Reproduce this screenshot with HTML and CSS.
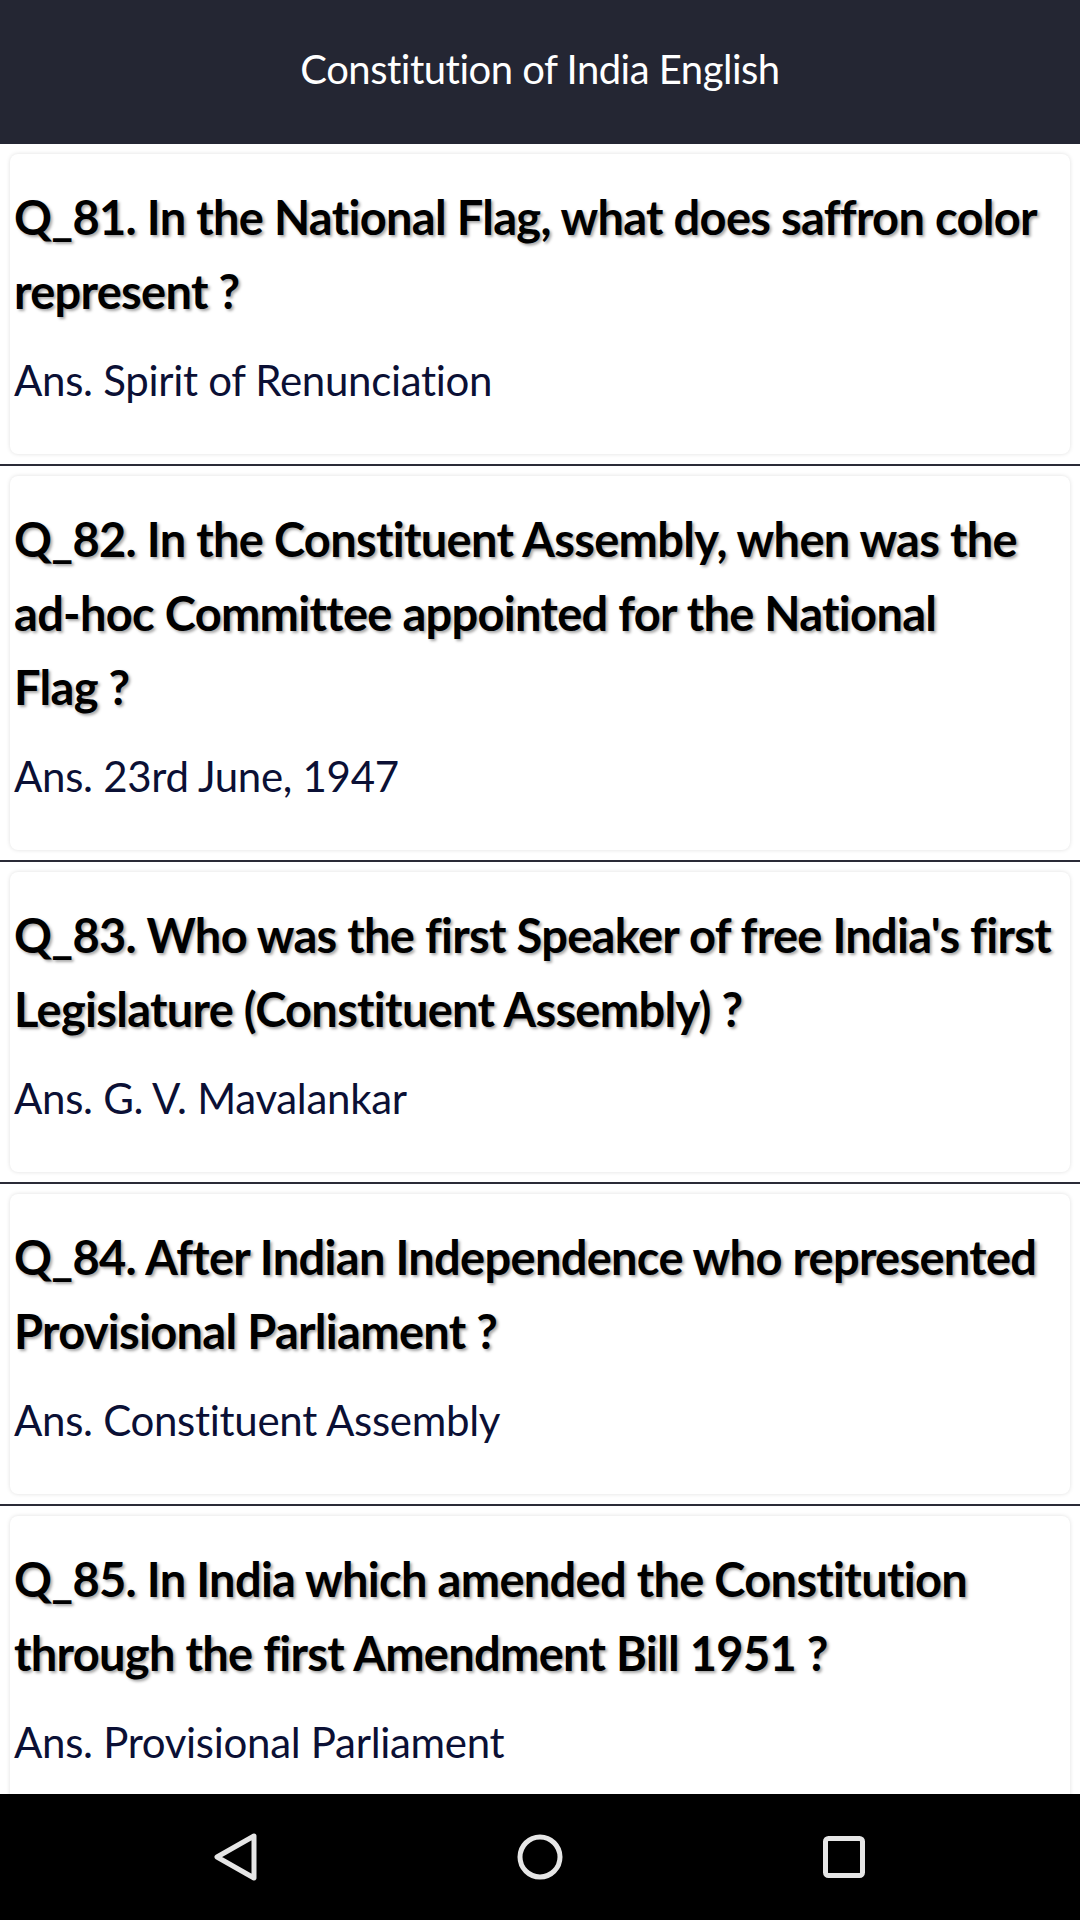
FILE: index.html
```html
<!DOCTYPE html>
<html lang="en">
<head>
<meta charset="utf-8">
<title>Constitution of India English</title>
<link rel="stylesheet" href="styles.css">
</head>
<body>
<div class="app">
  <header class="topbar">
    <h1 class="title">Constitution of India English</h1>
  </header>
  <main class="list">
    <section class="item">
      <div class="card">
        <p class="question">Q_81. In the National Flag, what does saffron color<br>represent ?</p>
        <p class="answer">Ans. Spirit of Renunciation</p>
      </div>
    </section>
    <section class="item">
      <div class="card">
        <p class="question">Q_82. In the Constituent Assembly, when was the<br>ad-hoc Committee appointed for the National<br>Flag ?</p>
        <p class="answer">Ans. 23rd June, 1947</p>
      </div>
    </section>
    <section class="item">
      <div class="card">
        <p class="question">Q_83. Who was the first Speaker of free India's first<br>Legislature (Constituent Assembly) ?</p>
        <p class="answer">Ans. G. V. Mavalankar</p>
      </div>
    </section>
    <section class="item">
      <div class="card">
        <p class="question">Q_84. After Indian Independence who represented<br>Provisional Parliament ?</p>
        <p class="answer">Ans. Constituent Assembly</p>
      </div>
    </section>
    <section class="item">
      <div class="card">
        <p class="question">Q_85. In India which amended the Constitution<br>through the first Amendment Bill 1951 ?</p>
        <p class="answer">Ans. Provisional Parliament</p>
      </div>
    </section>
  </main>
  <nav class="navbar">
    <div class="navcell">
      <svg class="navicon" viewBox="0 0 48 48" width="48" height="48"><polygon points="42,3 5,24 42,45" fill="none" stroke="#e6e6e6" stroke-width="5" stroke-linejoin="round"/></svg>
    </div>
    <div class="navcell">
      <svg class="navicon" viewBox="0 0 48 48" width="48" height="48"><circle cx="24" cy="24" r="20" fill="none" stroke="#e6e6e6" stroke-width="5"/></svg>
    </div>
    <div class="navcell">
      <svg class="navicon" viewBox="0 0 48 48" width="48" height="48"><rect x="5.5" y="5.5" width="37" height="37" rx="3" fill="none" stroke="#e6e6e6" stroke-width="5"/></svg>
    </div>
  </nav>
</div>
</body>
</html>
```
FILE: styles.css
```css
* { box-sizing: border-box; }
html, body {
  margin: 0;
  padding: 0;
  width: 1080px;
  height: 1920px;
  overflow: hidden;
  background: #ffffff;
  font-family: "Lato", "Noto Sans", sans-serif;
}
.app {
  display: flex;
  flex-direction: column;
  width: 1080px;
  height: 1920px;
}
.topbar {
  height: 144px;
  flex: 0 0 144px;
  background: #242633;
  display: flex;
  align-items: center;
  justify-content: center;
}
.title {
  margin: 0;
  color: #ffffff;
  font-size: 40px;
  font-weight: 400;
  letter-spacing: -0.5px;
  padding-bottom: 7px;
}
.list {
  flex: 1 1 auto;
  overflow: hidden;
}
.item {
  padding: 10px 10px;
  border-bottom: 2px solid #2a2b37;
}
.card {
  background: #ffffff;
  border-radius: 8px;
  box-shadow: 0 0 4px rgba(0, 0, 0, 0.13);
  padding: 26px 8px 49px 4px;
}
.question {
  margin: 0;
  white-space: nowrap;
  font-size: 47px;
  line-height: 74px;
  font-weight: 700;
  color: #000000;
  letter-spacing: -0.7px;
  text-shadow: 2px 2px 3px rgba(0, 0, 0, 0.35);
}
.answer {
  margin: 27px 0 0 0;
  white-space: nowrap;
  font-size: 42px;
  line-height: 50px;
  font-weight: 400;
  color: #0b1035;
  letter-spacing: -0.3px;
}
.navbar {
  flex: 0 0 126px;
  height: 126px;
  background: #000000;
  display: flex;
  justify-content: center;
  align-items: center;
}
.navcell {
  width: 304px;
  display: flex;
  justify-content: center;
  align-items: center;
}
.navicon { display: block; }
```
